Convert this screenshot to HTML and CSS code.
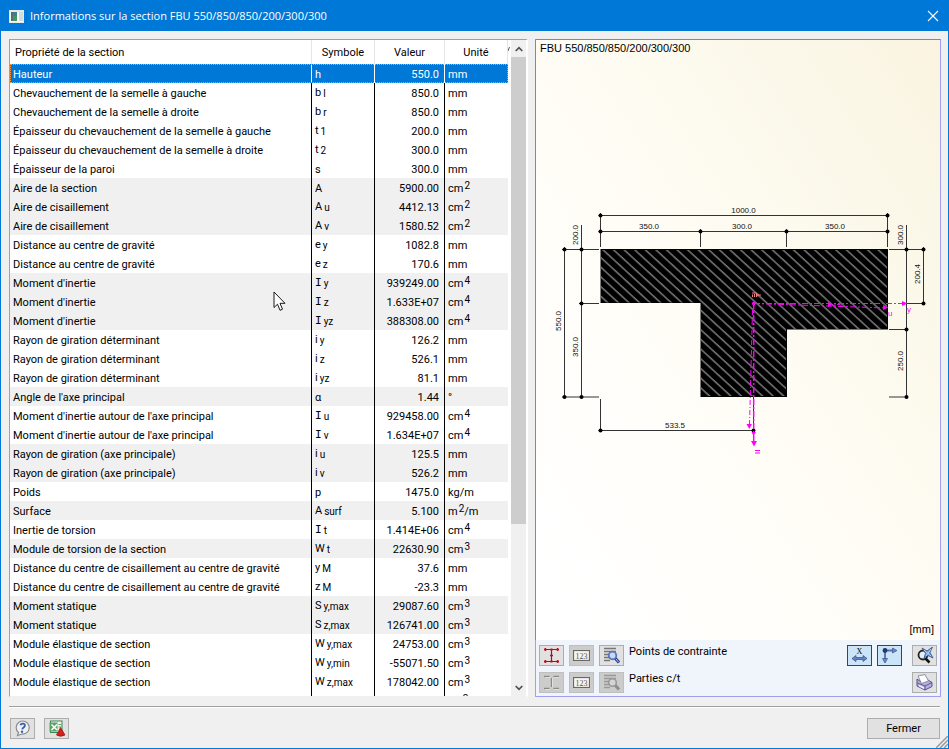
FILE: index.html
```html
<!DOCTYPE html>
<html lang="fr">
<head>
<meta charset="utf-8">
<title>Informations sur la section FBU 550/850/850/200/300/300</title>
<link rel="stylesheet" href="styles.css">
</head>
<body>
<div class="window">
  <header class="titlebar">
    <svg class="app-icon" width="15" height="13" viewBox="0 0 15 13" aria-hidden="true">
      <rect width="15" height="13" fill="#e4e8ea"/>
      <rect x="1" y="2" width="13" height="10" fill="#f8fafa"/>
      <rect x="2" y="2" width="6" height="9" fill="#3f7f8c"/>
      <rect x="2" y="6" width="6" height="5" fill="#3d9a5c"/>
      <rect x="2" y="2" width="2" height="9" fill="#586c78"/>
      <rect x="10" y="2" width="4" height="9" fill="#d3dadd"/>
    </svg>
    <h1 class="title">Informations sur la section FBU 550/850/850/200/300/300</h1>
    <button class="close" type="button" aria-label="Fermer la fenêtre">
      <svg width="12" height="12" viewBox="0 0 12 12"><path d="M1 1L11 11M11 1L1 11" stroke="#fff" stroke-width="1.1"/></svg>
    </button>
  </header>

  <main class="content">
    <section class="list">
      <div class="table-wrap">
        <table class="props">
          <colgroup><col class="c-name"><col class="c-sym"><col class="c-val"><col class="c-unit"></colgroup>
          <thead>
            <tr><th>Propriété de la section</th><th>Symbole</th><th>Valeur</th><th>Unité</th></tr>
          </thead>
          <tbody>
            <tr class="selected"><td>Hauteur</td><td>h</td><td>550.0</td><td>mm</td></tr>
            <tr><td>Chevauchement de la semelle à gauche</td><td>b<sub>l</sub></td><td>850.0</td><td>mm</td></tr>
            <tr><td>Chevauchement de la semelle à droite</td><td>b<sub>r</sub></td><td>850.0</td><td>mm</td></tr>
            <tr><td>Épaisseur du chevauchement de la semelle à gauche</td><td>t<sub>1</sub></td><td>200.0</td><td>mm</td></tr>
            <tr><td>Épaisseur du chevauchement de la semelle à droite</td><td>t<sub>2</sub></td><td>300.0</td><td>mm</td></tr>
            <tr><td>Épaisseur de la paroi</td><td>s</td><td>300.0</td><td>mm</td></tr>
            <tr class="alt"><td>Aire de la section</td><td>A</td><td>5900.00</td><td>cm<sup>2</sup></td></tr>
            <tr class="alt"><td>Aire de cisaillement</td><td>A<sub>u</sub></td><td>4412.13</td><td>cm<sup>2</sup></td></tr>
            <tr class="alt"><td>Aire de cisaillement</td><td>A<sub>v</sub></td><td>1580.52</td><td>cm<sup>2</sup></td></tr>
            <tr><td>Distance au centre de gravité</td><td>e<sub>y</sub></td><td>1082.8</td><td>mm</td></tr>
            <tr><td>Distance au centre de gravité</td><td>e<sub>z</sub></td><td>170.6</td><td>mm</td></tr>
            <tr class="alt"><td>Moment d'inertie</td><td><span class="bar-i">I</span><sub>y</sub></td><td>939249.00</td><td>cm<sup>4</sup></td></tr>
            <tr class="alt"><td>Moment d'inertie</td><td><span class="bar-i">I</span><sub>z</sub></td><td>1.633E+07</td><td>cm<sup>4</sup></td></tr>
            <tr class="alt"><td>Moment d'inertie</td><td><span class="bar-i">I</span><sub>yz</sub></td><td>388308.00</td><td>cm<sup>4</sup></td></tr>
            <tr><td>Rayon de giration déterminant</td><td>i<sub>y</sub></td><td>126.2</td><td>mm</td></tr>
            <tr><td>Rayon de giration déterminant</td><td>i<sub>z</sub></td><td>526.1</td><td>mm</td></tr>
            <tr><td>Rayon de giration déterminant</td><td>i<sub>yz</sub></td><td>81.1</td><td>mm</td></tr>
            <tr class="alt"><td>Angle de l'axe principal</td><td>α</td><td>1.44</td><td>°</td></tr>
            <tr><td>Moment d'inertie autour de l'axe principal</td><td><span class="bar-i">I</span><sub>u</sub></td><td>929458.00</td><td>cm<sup>4</sup></td></tr>
            <tr><td>Moment d'inertie autour de l'axe principal</td><td><span class="bar-i">I</span><sub>v</sub></td><td>1.634E+07</td><td>cm<sup>4</sup></td></tr>
            <tr class="alt"><td>Rayon de giration (axe principale)</td><td>i<sub>u</sub></td><td>125.5</td><td>mm</td></tr>
            <tr class="alt"><td>Rayon de giration (axe principale)</td><td>i<sub>v</sub></td><td>526.2</td><td>mm</td></tr>
            <tr><td>Poids</td><td>p</td><td>1475.0</td><td>kg/m</td></tr>
            <tr class="alt"><td>Surface</td><td>A<sub>surf</sub></td><td>5.100</td><td>m<sup>2</sup>/m</td></tr>
            <tr><td>Inertie de torsion</td><td><span class="bar-i">I</span><sub>t</sub></td><td>1.414E+06</td><td>cm<sup>4</sup></td></tr>
            <tr class="alt"><td>Module de torsion de la section</td><td>W<sub>t</sub></td><td>22630.90</td><td>cm<sup>3</sup></td></tr>
            <tr><td>Distance du centre de cisaillement au centre de gravité</td><td>y<sub>M</sub></td><td>37.6</td><td>mm</td></tr>
            <tr><td>Distance du centre de cisaillement au centre de gravité</td><td>z<sub>M</sub></td><td>-23.3</td><td>mm</td></tr>
            <tr class="alt"><td>Moment statique</td><td>S<sub>y,max</sub></td><td>29087.60</td><td>cm<sup>3</sup></td></tr>
            <tr class="alt"><td>Moment statique</td><td>S<sub>z,max</sub></td><td>126741.00</td><td>cm<sup>3</sup></td></tr>
            <tr><td>Module élastique de section</td><td>W<sub>y,max</sub></td><td>24753.00</td><td>cm<sup>3</sup></td></tr>
            <tr><td>Module élastique de section</td><td>W<sub>y,min</sub></td><td>-55071.50</td><td>cm<sup>3</sup></td></tr>
            <tr><td>Module élastique de section</td><td>W<sub>z,max</sub></td><td>178042.00</td><td>cm<sup>3</sup></td></tr>
            <tr><td></td><td></td><td></td><td>&nbsp;&nbsp;&nbsp;&nbsp;&nbsp;<sup>3</sup></td></tr>
          </tbody>
        </table>
      </div>
      <div class="scroll-gap"><svg width="3" height="6" viewBox="0 0 3 6"><path d="M0 5L1.5 1" stroke="#555"/></svg></div>
      <div class="scrollbar">
        <button class="scroll-btn" type="button" aria-label="Défiler vers le haut"><svg width="8" height="6" viewBox="0 0 8 6"><path d="M.7 5L4 1.6L7.3 5" fill="none" stroke="#505050" stroke-width="1.7"/></svg></button>
        <div class="track"><div class="thumb"></div></div>
        <button class="scroll-btn" type="button" aria-label="Défiler vers le bas"><svg width="8" height="6" viewBox="0 0 8 6"><path d="M.7 1L4 4.4L7.3 1" fill="none" stroke="#505050" stroke-width="1.7"/></svg></button>
      </div>
    </section>

    <section class="preview">
      <div class="canvas">
        <svg class="drawing" viewBox="536 40 404 600" role="img" aria-label="Section FBU">
          <defs>
            <pattern id="hatch" width="20" height="7.15" patternUnits="userSpaceOnUse" patternTransform="translate(605.5 247.4) rotate(42.5)">
              <path d="M0 3.5H20" stroke="#b4b4b4" stroke-width="1"/>
            </pattern>
          </defs>
          <path id="section" d="M600.5 249H888V329.5H787V397H700.5V303H600.5Z" fill="#000"/>
          <path d="M601 250H887V329H786V396H701V302.500H601Z" fill="url(#hatch)"/>
          <g class="dims">
            <path d="M598.500 215.500H889M598.500 231.500H889M600.500 213V247M700.500 229V247M786.500 229V247M887.500 213V247"/>
            <path d="M564.500 247V398M581.500 225V398M562 249.500H599M579 303.500H599M562 397H599"/>
            <path d="M906.500 225V398M923.500 247V305M889 249.500H925M906 303.500H925M889 329.500H908M889 397H908"/>
            <path d="M600.500 399V432M598.500 430.500H755M753.500 397V432"/>
          </g>
          <g class="dots">
            <circle cx="600.500" cy="215.500" r="2"/><circle cx="887.500" cy="215.500" r="2"/>
            <circle cx="600.500" cy="231.500" r="2"/><circle cx="700.500" cy="231.500" r="2"/><circle cx="786.500" cy="231.500" r="2"/><circle cx="887.500" cy="231.500" r="2"/>
            <circle cx="564.500" cy="249.500" r="2"/><circle cx="581.500" cy="249.500" r="2"/><circle cx="581.500" cy="303.500" r="2"/><circle cx="564.500" cy="397" r="2"/><circle cx="581.500" cy="397" r="2"/>
            <circle cx="906.500" cy="249.500" r="2"/><circle cx="923.500" cy="249.500" r="2"/><circle cx="923.500" cy="303.500" r="2"/><circle cx="906.500" cy="329.500" r="2"/><circle cx="906.500" cy="397" r="2"/>
            <circle cx="600.500" cy="430.500" r="2"/><circle cx="753.500" cy="430.500" r="2"/>
          </g>
          <g class="axes">
            <path d="M754 303.500H904M754 303.500L886 308" stroke-dasharray="6 2 2 2"/>
            <path d="M753.700 303V446" stroke-dasharray="6 2 2 2" stroke-width="1.500"/>
            <path d="M752.500 310L749.500 425" stroke-dasharray="5 2 1 2"/>
            <path class="tip" d="M902 301L907.500 303.500L902 306ZM883 305L888.500 307.500L883 310ZM828 302L833 304.500L828 307ZM746.500 424H752L749.300 429ZM751 441H757L754 446.500ZM751.500 432H756L753.500 436Z"/>
            <circle class="tip" cx="753.700" cy="303.500" r="1.800"/>
          </g>
          <g class="axis-label">
            <text x="888" y="316">u</text><text x="907" y="312">y</text>
            <path d="M835 303V307M837 304.500H840M841 303V307" stroke="#f0f" stroke-width=".9"/>
            <path d="M755 450.500H760M755 453H760" stroke="#f0f" stroke-width="1.200"/>
          </g>
          <path d="M752 293H756.500V297M752.500 297V294.500M754.500 294V297M756 295H761M758 293.500V296.500" fill="none" stroke="#f08080"/>
          <g class="dim-text">
            <text x="743.500" y="213">1000.0</text>
            <text x="649" y="229">350.0</text><text x="742" y="229">300.0</text><text x="835" y="229">350.0</text>
            <text x="675" y="428">533.5</text>
            <text transform="translate(578 235) rotate(-90)">200.0</text>
            <text transform="translate(561 321) rotate(-90)">550.0</text>
            <text transform="translate(578 347) rotate(-90)">350.0</text>
            <text transform="translate(903 235) rotate(-90)">300.0</text>
            <text transform="translate(920 274) rotate(-90)">200.4</text>
            <text transform="translate(903 361) rotate(-90)">250.0</text>
          </g>
        </svg>
        <div class="caption">FBU 550/850/850/200/300/300</div>
        <div class="scale">[mm]</div>
      </div>
      <div class="tools">
        <div class="tool-row">
          <button class="tool" type="button" aria-label="Afficher les points de contrainte" aria-describedby="lbl-stress">
            <svg width="17" height="17" viewBox="0 0 17 17"><path d="M2 2.500H15M2 14.500H15M8.500 2.500V14.500" stroke="#35357c" stroke-width="1.200"/><path d="M1 2.500H3.500M7.500 2.500H9.500M13.500 2.500H16M1 14.500H3.500M7.500 14.500H9.500M13.500 14.500H16M8.500 7.500V9.500" stroke="#e00010" stroke-width="2"/><path d="M2.500 1V4M14.500 1V4M2.500 13V16M14.500 13V16M7 8.500H10" stroke="#e00010"/></svg>
          </button>
          <button class="tool off" type="button" disabled aria-label="Numéros des points">
            <svg width="17" height="11" viewBox="0 0 17 11"><rect x=".5" y=".5" width="16" height="10" fill="#f5f5ee" stroke="#666b61" stroke-width="1.200"/><text x="8.500" y="9" class="num">123</text></svg>
          </button>
          <button class="tool" type="button" aria-label="Détails des points de contrainte">
            <svg width="18" height="17" viewBox="0 0 18 17"><path d="M1 1.500H13M1 4.500H13M1 7.500H7M1 10.500H6M1 13.500H7" stroke="#777" stroke-width="1.400"/><path d="M12 11L16 15.500" stroke="#27398d" stroke-width="3"/><circle cx="9.500" cy="8.500" r="3.800" fill="#c6daf4" stroke="#5873bd" stroke-width="1.800"/><path d="M13 12L15.500 15" stroke="#b8caec"/></svg>
          </button>
          <span class="tool-label" id="lbl-stress">Points de contrainte</span>
          <button class="tool on push" type="button" aria-label="Cotes" aria-pressed="true">
            <svg width="17" height="17" viewBox="0 0 17 17"><text x="8.500" y="7" class="x-mark">X</text><path d="M1 11.500L5 8.500V10.500H12V8.500L16 11.500L12 14.500V12.500H5V14.500Z" fill="#6284c5" stroke="#344e86" stroke-width=".7"/></svg>
          </button>
          <button class="tool on" type="button" aria-label="Axes" aria-pressed="true">
            <svg width="17" height="17" viewBox="0 0 17 17"><path d="M4 14V3.500H12" fill="none" stroke="#536fae" stroke-width="1.800"/><path d="M11.500 1L16 3.500L11.500 6ZM1.500 11.500H6.500L4 16Z" fill="#6d8ac6" stroke="#38558c" stroke-width=".7"/><circle cx="4" cy="3.500" r="2.400" fill="#233a6e"/></svg>
          </button>
          <button class="tool apart" type="button" aria-label="Zoom sur toute la section">
            <svg width="18" height="17" viewBox="0 0 18 17"><circle cx="7" cy="8" r="4.500" fill="#e9edf5" stroke="#222" stroke-width="1.800"/><path d="M9.500 11.500L13.500 15.500" stroke="#111" stroke-width="2.500"/><path d="M6 1L11 4L16.500 0L14 5.500L17 11L12 8.500L8 11L9.500 6.500Z" fill="#699bd9" stroke="#29528f" stroke-width=".8"/><path d="M8 3L15 9M15 2L10 9" stroke="#b7d2f2"/></svg>
          </button>
        </div>
        <div class="tool-row">
          <button class="tool off" type="button" disabled aria-label="Afficher les parties c/t" aria-describedby="lbl-parts">
            <svg width="17" height="17" viewBox="0 0 17 17"><path d="M1 2.500H6.500M10.500 2.500H16M1 14.500H6.500M10.500 14.500H16M8.500 4V13" stroke="#888b80" stroke-width="1.300"/><path d="M2 3.500H7M11 3.500H16M2 15.500H7M11 15.500H16M9.500 4V13" stroke="#eee" stroke-width=".7"/></svg>
          </button>
          <button class="tool off" type="button" disabled aria-label="Numéros des parties">
            <svg width="17" height="11" viewBox="0 0 17 11"><rect x=".5" y=".5" width="16" height="10" fill="#f5f5ee" stroke="#666b61" stroke-width="1.200"/><text x="8.500" y="9" class="num">123</text></svg>
          </button>
          <button class="tool off" type="button" disabled aria-label="Détails des parties c/t">
            <svg width="18" height="17" viewBox="0 0 18 17"><path d="M1 1.500H13M1 4.500H13M1 7.500H7M1 10.500H6M1 13.500H7" stroke="#999" stroke-width="1.300"/><path d="M12 11L16 15.500" stroke="#8d8d8d" stroke-width="3"/><circle cx="9.500" cy="8.500" r="3.800" fill="#d5d5d2" stroke="#999" stroke-width="1.600"/></svg>
          </button>
          <span class="tool-label" id="lbl-parts">Parties c/t</span>
          <button class="tool push" type="button" aria-label="Imprimer">
            <svg width="17" height="17" viewBox="0 0 17 17"><path d="M1 5L5 8L12 6L16 8.500V12.500L9 16L1 12Z" fill="#b5b0e0" stroke="#49457c" stroke-width=".9"/><path d="M2 2L9 .5L12.500 7L5.500 9.500Z" fill="#fff" stroke="#77749a" stroke-width=".8"/><path d="M1.500 9L9 12L16 8.500M9 12V16" fill="none" stroke="#49457c" stroke-width=".8"/><path d="M3 11L8 13.200V15L3 12.600Z" fill="#f6f6ff"/></svg>
          </button>
        </div>
      </div>
    </section>
  </main>

  <footer class="footer">
    <button class="tool" type="button" aria-label="Aide">
      <svg width="17" height="17" viewBox="0 0 17 17"><path d="M3.500 15.500L4.500 12.500A6.500 6.500 0 1 1 8 14Z" fill="#f1f1f5" stroke="#8a8c94" stroke-width="1.200"/><path d="M6.500 5.200C7 3 11.300 3 10.800 5.800C10.500 7.500 8.500 7.500 8.300 9.300" fill="none" stroke="#3d5fa8" stroke-width="1.900"/><circle cx="8" cy="11.700" r="1.200" fill="#3d5fa8"/></svg>
    </button>
    <button class="tool" type="button" aria-label="Exporter vers Excel">
      <svg width="18" height="17" viewBox="0 0 18 17"><rect x="2.500" y="1" width="11.500" height="11.500" fill="#eef5ec" stroke="#3f8450"/><rect x="1.500" y="2.500" width="8" height="9" fill="#5ba266"/><path d="M3.500 4.500L9 10M9 4.500L3.500 10" stroke="#fff" stroke-width="1.600"/><path d="M10.500 4.500H13.500M10.500 7H13.500" stroke="#6b9d72"/><path d="M12.500 7.500L17 15Q12.500 17.500 8.500 15Z" fill="#d32020" stroke="#8d1010" stroke-width=".7"/></svg>
    </button>
    <button class="action" type="button">Fermer</button>
  </footer>
  <svg class="grip" width="12" height="12" viewBox="0 0 12 12" aria-hidden="true"><path d="M0 12L12 0M4 12L12 4M8 12L12 8" stroke="#999" stroke-width="1.500"/></svg>
  <svg class="cursor" width="14" height="21" viewBox="0 0 14 21" aria-hidden="true"><path d="M1 1V16.500L4.500 13.200L7 19.300L9.500 18.200L7 12.300H12Z" fill="#fff" stroke="#000" stroke-width=".9"/></svg>
</div>
</body>
</html>
```
FILE: styles.css
```css
* { box-sizing: border-box; }

body {
  margin: 0;
  font: 11px/13px Roboto, "Liberation Sans", sans-serif;
  color: #000;
}

button { font: inherit; color: inherit; padding: 0; margin: 0; }
svg { display: block; }

.window {
  position: relative;
  display: flex;
  flex-direction: column;
  height: 100vh;
  background: #f0f0f0;
  border: 1px solid #0078d7;
  overflow: hidden;
}

.titlebar {
  display: flex;
  align-items: center;
  gap: 6px;
  height: 30px;
  flex: none;
  padding: 0 9px 0 8px;
  background: #0078d7;
  color: #fff;
}
.title { flex: 1; margin: 0; font: 11px/16px "Open Sans", "Noto Sans", sans-serif; }
.close { border: 0; background: none; }

.content {
  flex: 1;
  min-height: 0;
  display: grid;
  grid-template-columns: 519fr 406fr;
  grid-template-rows: minmax(0, 1fr);
  gap: 7px;
  padding: 8px 7px 0 8px;
}

.list {
  display: flex;
  background: #fff;
  border: 1px solid #a0a0a0;
  border-right: 2px solid #fff;
  border-bottom-color: #f0f0f0;
  overflow: hidden;
}
.table-wrap { flex: 1; overflow: hidden; }
.props { width: 100%; table-layout: fixed; border-collapse: separate; border-spacing: 0; }
.c-name { width: 302px; }
.c-sym { width: 63px; }
.c-val { width: 70px; }
.props th {
  height: 24px;
  padding: 0;
  font-weight: 400;
  border-right: 1px solid #e5e5e5;
}
.props th:first-child { text-align: left; padding-left: 5px; }
.props td {
  height: 19px;
  padding: 2px 3px 0;
  white-space: nowrap;
  border-right: 1px solid #000;
}
.props td:has(sub) { padding-top: 0; }
.props td:nth-child(3) { text-align: right; padding-right: 5px; }
.props td:last-child { border-right: 0; }
.alt { background: #f0f0f0; }
.selected { background: #0078d7; color: #fff; outline: 1px dotted #ff9a3c; outline-offset: -1px; }
.selected td { border-right-color: #fff; }
sub, sup { font-size: 10px; line-height: 0; }
sub { vertical-align: -1px; padding-left: 2px; }
sup { vertical-align: 3px; padding-left: 1px; }
.bar-i { font-family: "DejaVu Sans Mono", monospace; }

.scroll-gap { width: 3px; padding-top: 6px; }
.scrollbar { display: flex; flex-direction: column; width: 15px; background: #f0f0f0; }
.scroll-btn { display: grid; place-items: center; height: 17px; border: 0; background: none; }
.track { flex: 1; }
.thumb { height: 75%; background: #cdcdcd; }

.preview {
  display: flex;
  flex-direction: column;
  border: 1px solid #a0a0ee;
  border-top-color: #888;
}
.canvas {
  flex: 1;
  min-height: 0;
  display: grid;
  grid-template: minmax(0, 1fr) / minmax(0, 1fr);
  margin-left: -1px;
  border-left: 1px solid #888;
  background: linear-gradient(56deg, #ffffff 8%, #fffdf6 45%, #fbf8e9 80%, #faf3e0 100%);
  font-family: "Liberation Sans", sans-serif;
}
.canvas > * { grid-area: 1 / 1; }
.drawing { width: 100%; height: 100%; }
.caption { padding: 2px 4px; }
.scale { align-self: end; justify-self: end; padding: 4px 6px; }

.dims { stroke: #333; stroke-width: 1; fill: none; }
.dots { fill: #000; }
.dim-text { font: 8px "Liberation Sans", sans-serif; text-anchor: middle; fill: #111; }
.axes { stroke: #f0f; stroke-width: 1; fill: none; }
.axes .tip { fill: #f0f; stroke: none; }
.axis-label { font: 8px "Liberation Sans", sans-serif; fill: #f0f; }

.tools {
  display: flex;
  flex-direction: column;
  gap: 6px;
  padding: 5px 3px 3px;
  background: #f0f4fb;
}
.tool-row { display: flex; gap: 5px; }
.tool {
  display: grid;
  place-items: center;
  width: 25px;
  height: 21px;
  border: 1px solid #adadad;
  background: #e1e1e1;
}
.tool.off { background: #ccc; border-color: #bfbfbf; }
.tool.on { background: #cce4f7; border-color: #005499; }
.tool.push { margin-left: auto; }
.tool.apart { margin-left: 5px; }
.num { font: 8px "Liberation Serif", serif; text-anchor: middle; fill: #555; }
.x-mark { font: 8px "Liberation Serif", serif; text-anchor: middle; fill: #000; }

.footer {
  display: flex;
  align-items: center;
  gap: 9px;
  margin: 9px 8px 9px;
  padding: 11px 0 0 1px;
  border-top: 1px solid #a0a0a0;
  box-shadow: inset 0 1px #fff;
}
.action {
  width: 73px;
  height: 21px;
  margin-left: auto;
  border: 1px solid #adadad;
  background: #e1e1e1;
}

.grip { position: absolute; right: 0; bottom: 0; }
.cursor { position: absolute; left: 272px; top: 290px; }
```
